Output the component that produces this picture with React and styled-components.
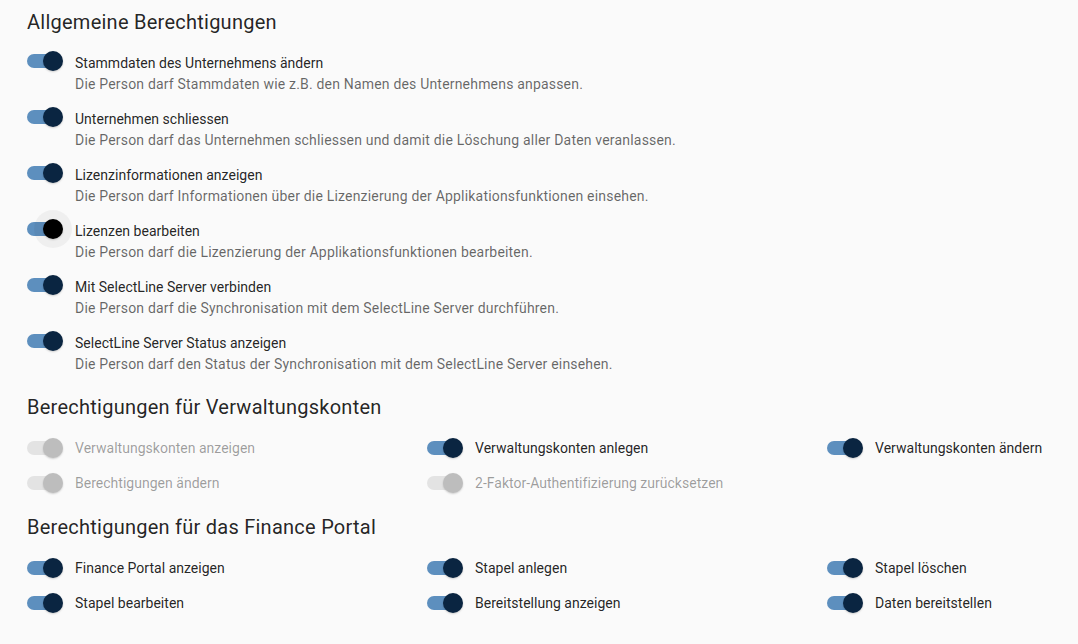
import React from 'react';
import styled, { createGlobalStyle } from 'styled-components';

const GlobalStyle = createGlobalStyle`
  body {
    margin: 0;
    background: #fafafa;
    font-family: Roboto, "Noto Sans", sans-serif;
    color: rgba(0, 0, 0, 0.87);
  }
`;

const Page = styled.div`
  padding: 6px 27px 0 27px;
`;

const SectionTitle = styled.h2`
  margin: ${(p) => p.$top || 0}px 0 0 0;
  font-size: 20px;
  font-weight: 400;
  line-height: 32px;
  letter-spacing: 0.25px;
`;

const List = styled.div`
  margin-top: 4px;
  display: flex;
  flex-direction: column;
  gap: 3px;
`;

const Row = styled.div`
  display: flex;
  align-items: flex-start;
`;

const Texts = styled.div`
  padding-top: 11px;
  font-size: 14px;
  line-height: 21px;
`;

const Label = styled.div`
  padding-left: 2px;
  letter-spacing: 0.02px;
  white-space: nowrap;
  color: ${(p) => (p.$disabled ? 'rgba(0, 0, 0, 0.38)' : 'rgba(0, 0, 0, 0.87)')};
`;

const Description = styled.div`
  padding-left: 2px;
  letter-spacing: 0.19px;
  color: rgba(0, 0, 0, 0.6);
`;

const Grid = styled.div`
  margin-top: ${(p) => p.$top || 0}px;
  display: grid;
  grid-template-columns: 400px 400px auto;
  grid-auto-rows: 35px;
`;

const Cell = styled.div`
  display: flex;
  align-items: center;
  height: 38px;
  font-size: 14px;
  line-height: 21px;
`;

const SwitchRoot = styled.span`
  position: relative;
  display: inline-block;
  flex-shrink: 0;
  width: 58px;
  height: 38px;
  margin-left: -12px;
`;

const Track = styled.span`
  display: block;
  margin: 12px 0 0 12px;
  width: 34px;
  height: 14px;
  border-radius: 7px;
  background: ${(p) => (p.$disabled ? '#e3e3e3' : '#5d8fbe')};
`;

const Halo = styled.span`
  position: absolute;
  left: 19px;
  top: 0;
  width: 38px;
  height: 38px;
  border-radius: 50%;
  background: rgba(0, 0, 0, 0.045);
`;

const Thumb = styled.span`
  position: absolute;
  left: 28px;
  top: 9px;
  width: 20px;
  height: 20px;
  border-radius: 50%;
  background: ${(p) => (p.$disabled ? '#bdbdbd' : p.$focused ? '#000000' : '#0a2541')};
  box-shadow: 0 1px 2px rgba(0, 0, 0, 0.18);
`;

const Switch = ({ disabled, focused }) => (
  <SwitchRoot>
    {focused && <Halo />}
    <Track $disabled={disabled} />
    <Thumb $disabled={disabled} $focused={focused} />
  </SwitchRoot>
);

const general = [
  ['Stammdaten des Unternehmens ändern', 'Die Person darf Stammdaten wie z.B. den Namen des Unternehmens anpassen.'],
  ['Unternehmen schliessen', 'Die Person darf das Unternehmen schliessen und damit die Löschung aller Daten veranlassen.'],
  ['Lizenzinformationen anzeigen', 'Die Person darf Informationen über die Lizenzierung der Applikationsfunktionen einsehen.'],
  ['Lizenzen bearbeiten', 'Die Person darf die Lizenzierung der Applikationsfunktionen bearbeiten.', true],
  ['Mit SelectLine Server verbinden', 'Die Person darf die Synchronisation mit dem SelectLine Server durchführen.'],
  ['SelectLine Server Status anzeigen', 'Die Person darf den Status der Synchronisation mit dem SelectLine Server einsehen.'],
];

const accounts = [
  ['Verwaltungskonten anzeigen', true],
  ['Verwaltungskonten anlegen', false],
  ['Verwaltungskonten ändern', false],
  ['Berechtigungen ändern', true],
  ['2-Faktor-Authentifizierung zurücksetzen', true],
];

const finance = [
  'Finance Portal anzeigen',
  'Stapel anlegen',
  'Stapel löschen',
  'Stapel bearbeiten',
  'Bereitstellung anzeigen',
  'Daten bereitstellen',
];

export default function App() {
  return (
    <Page>
      <GlobalStyle />
      <SectionTitle>Allgemeine Berechtigungen</SectionTitle>
      <List>
        {general.map(([label, desc, focused]) => (
          <Row key={label}>
            <Switch focused={focused} />
            <Texts>
              <Label>{label}</Label>
              <Description>{desc}</Description>
            </Texts>
          </Row>
        ))}
      </List>

      <SectionTitle $top={16}>Berechtigungen für Verwaltungskonten</SectionTitle>
      <Grid $top={6}>
        {accounts.map(([label, disabled]) => (
          <Cell key={label}>
            <Switch disabled={disabled} />
            <Label $disabled={disabled}>{label}</Label>
          </Cell>
        ))}
      </Grid>

      <SectionTitle $top={12}>Berechtigungen für das Finance Portal</SectionTitle>
      <Grid $top={6}>
        {finance.map((label) => (
          <Cell key={label}>
            <Switch />
            <Label>{label}</Label>
          </Cell>
        ))}
      </Grid>
    </Page>
  );
}
